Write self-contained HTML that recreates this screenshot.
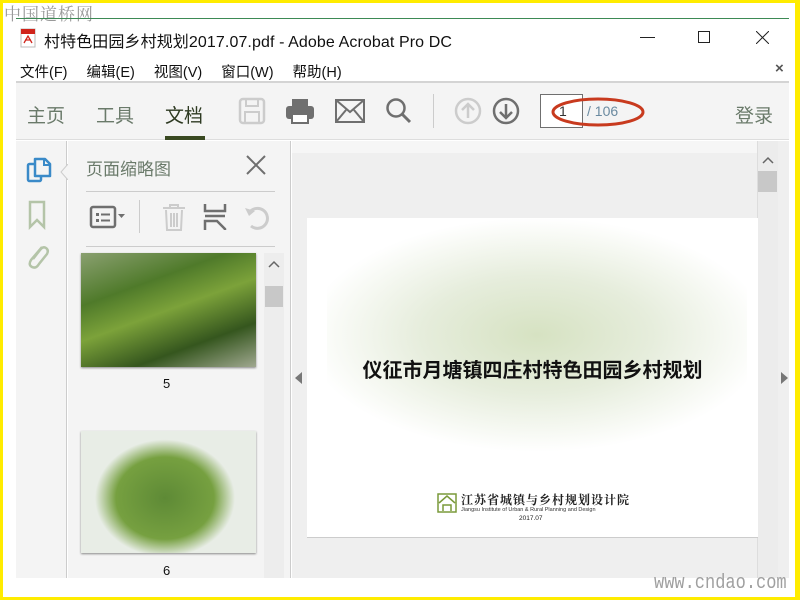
<!DOCTYPE html>
<html><head><meta charset="utf-8"><style>
*{margin:0;padding:0;box-sizing:border-box}
body{width:800px;height:600px;overflow:hidden;background:#ffec00;font-family:"Liberation Sans","Noto Sans CJK SC",sans-serif;position:relative}
.a{position:absolute}
</style></head><body>
<div class="a" style="left:3px;top:3px;width:792px;height:594px;background:#fff"></div>
<div class="a" style="left:4px;top:0px;font-family:'Noto Serif CJK SC',serif;font-size:17px;color:#9a9a9a;letter-spacing:1px">中国道桥网</div>
<div class="a" style="left:16px;top:18px;width:773px;height:1px;background:#3d8a55"></div>
<!-- title -->
<svg class="a" style="left:20px;top:28px" width="16" height="20"><rect x="1" y="1" width="14" height="18" fill="#fff" stroke="#bbb"/><rect x="1" y="1" width="14" height="5" fill="#d0241b"/><path d="M4 15 L8 8 L12 15 M5 12 H11" stroke="#d0241b" fill="none" stroke-width="1.3"/></svg>
<div class="a" style="left:44px;top:28px;font-size:16px;color:#111;letter-spacing:0.1px">村特色田园乡村规划2017.07.pdf - Adobe Acrobat Pro DC</div>
<div class="a" style="left:640px;top:37px;width:15px;height:1px;background:#222"></div>
<div class="a" style="left:698px;top:31px;width:12px;height:12px;border:1px solid #222"></div>
<svg class="a" style="left:756px;top:31px" width="13" height="13"><path d="M0 0L13 13M13 0L0 13" stroke="#222"/></svg>
<!-- menu -->
<div class="a" style="left:20px;top:61px;font-size:14.5px;color:#111">
<span style="margin-right:19px">文件(F)</span><span style="margin-right:19px">编辑(E)</span><span style="margin-right:19px">视图(V)</span><span style="margin-right:19px">窗口(W)</span><span>帮助(H)</span></div>
<div class="a" style="left:775px;top:60px;font-size:15px;color:#555;font-weight:bold">×</div>
<div class="a" style="left:16px;top:81px;width:773px;height:2px;background:#d4d4d4"></div>
<!-- toolbar -->
<div class="a" style="left:16px;top:83px;width:773px;height:57px;background:#f4f4f4;border-bottom:1px solid #ddd"></div>
<div class="a" style="left:27px;top:101px;font-size:19px;color:#6a7a6a">主页</div>
<div class="a" style="left:96px;top:101px;font-size:19px;color:#6a7a6a">工具</div>
<div class="a" style="left:165px;top:101px;font-size:19px;color:#2e3a22">文档</div>
<div class="a" style="left:165px;top:136px;width:40px;height:4px;background:#3a4a22"></div>
<svg class="a" style="left:238px;top:97px" width="28" height="28"><rect x="2" y="2" width="24" height="24" rx="3" fill="none" stroke="#ccc" stroke-width="2.5"/><rect x="8" y="2" width="12" height="7" fill="none" stroke="#ccc" stroke-width="2"/><rect x="7" y="15" width="14" height="11" fill="none" stroke="#ccc" stroke-width="2"/></svg>
<svg class="a" style="left:285px;top:97px" width="30" height="28"><rect x="7" y="2" width="16" height="7" fill="#6f6f6f"/><rect x="1" y="9" width="28" height="13" rx="3" fill="#6f6f6f"/><rect x="7" y="17" width="16" height="9" fill="#fff" stroke="#6f6f6f" stroke-width="2"/></svg>
<svg class="a" style="left:335px;top:99px" width="30" height="24"><rect x="1" y="1" width="28" height="22" fill="none" stroke="#6f6f6f" stroke-width="2"/><path d="M1 1L15 13L29 1M1 23L11 11M29 23L19 11" stroke="#6f6f6f" fill="none" stroke-width="2"/></svg>
<svg class="a" style="left:385px;top:97px" width="28" height="28"><circle cx="11" cy="11" r="8.5" fill="none" stroke="#6f6f6f" stroke-width="2.5"/><path d="M17 17L25 25" stroke="#6f6f6f" stroke-width="3"/></svg>
<div class="a" style="left:433px;top:94px;width:1px;height:34px;background:#ccc"></div>
<svg class="a" style="left:454px;top:97px" width="28" height="28"><circle cx="14" cy="14" r="12" fill="none" stroke="#ccc" stroke-width="2.5"/><path d="M14 21V7M8 13L14 7L20 13" stroke="#ccc" fill="none" stroke-width="2.5"/></svg>
<svg class="a" style="left:492px;top:97px" width="28" height="28"><circle cx="14" cy="14" r="12" fill="none" stroke="#6f6f6f" stroke-width="2.5"/><path d="M14 7V21M8 15L14 21L20 15" stroke="#6f6f6f" fill="none" stroke-width="2.5"/></svg>
<div class="a" style="left:540px;top:94px;width:43px;height:34px;border:1px solid #6f6f6f;background:#fff"></div>
<div class="a" style="left:559px;top:103px;font-size:14px;color:#333">1</div>
<div class="a" style="left:587px;top:103px;font-size:14px;color:#6a8aa0">/ 106</div>
<svg class="a" style="left:550px;top:92px" width="96" height="40"><ellipse cx="48" cy="20" rx="45" ry="13" fill="none" stroke="#c83a1e" stroke-width="3"/></svg>
<div class="a" style="left:735px;top:101px;font-size:19px;color:#6a7a6a">登录</div>
<!-- left rail -->
<div class="a" style="left:16px;top:141px;width:51px;height:437px;background:#f4f4f4;border-right:1px solid #ccc"></div>
<svg class="a" style="left:25px;top:155px" width="28" height="30"><rect x="3" y="9" width="13" height="17" rx="1.5" fill="none" stroke="#3a8ac8" stroke-width="2.5"/><path d="M10 21V4H20L25 9V21Z" fill="#f4f4f4" stroke="#3a8ac8" stroke-width="2.5" stroke-linejoin="round"/><path d="M19 4V10H25" fill="none" stroke="#3a8ac8" stroke-width="2"/></svg>
<svg class="a" style="left:28px;top:200px" width="18" height="30"><path d="M2 2H16V27L9 20L2 27Z" fill="none" stroke="#b4c4a8" stroke-width="2.5"/></svg>
<svg class="a" style="left:24px;top:243px" width="28" height="30"><path d="M18 4L7 17Q4 22 8 24Q12 26 15 21L23 11Q25 7 22 5Q19 3 16 7L9 16" fill="none" stroke="#b4c4a8" stroke-width="2.5"/></svg>
<svg class="a" style="left:60px;top:164px" width="9" height="16"><path d="M8 0L1 8L8 16" fill="#f4f4f4" stroke="#ccc"/></svg>
<!-- panel -->
<div class="a" style="left:68px;top:141px;width:223px;height:437px;background:#f4f4f4;border-right:1px solid #ccc"></div>
<div class="a" style="left:86px;top:155px;font-size:17px;color:#6a7a6a">页面缩略图</div>
<svg class="a" style="left:246px;top:155px" width="20" height="20"><path d="M1 1L19 19M19 1L1 19" stroke="#6f6f6f" stroke-width="2"/></svg>
<div class="a" style="left:86px;top:191px;width:189px;height:1px;background:#ccc"></div>
<svg class="a" style="left:89px;top:205px" width="40" height="24"><rect x="2" y="2" width="24" height="20" rx="2" fill="none" stroke="#6f6f6f" stroke-width="2.5"/><rect x="7" y="8" width="3" height="3" fill="#6f6f6f"/><rect x="7" y="14" width="3" height="3" fill="#6f6f6f"/><path d="M12 9.5H21M12 15.5H21" stroke="#6f6f6f" stroke-width="2"/><path d="M29 9H36L32.5 13Z" fill="#6f6f6f"/></svg>
<div class="a" style="left:139px;top:200px;width:1px;height:33px;background:#ccc"></div>
<svg class="a" style="left:161px;top:202px" width="26" height="30"><path d="M2 6H24M9 6V3H17V6M5 8L6 28H20L21 8M10 11V25M13 11V25M16 11V25" fill="none" stroke="#ccc" stroke-width="2"/></svg>
<svg class="a" style="left:202px;top:202px" width="26" height="30"><path d="M3 2V9H23V2M3 14H23M3 28V19H15L23 27V28" fill="none" stroke="#6f6f6f" stroke-width="2.5"/></svg>
<svg class="a" style="left:243px;top:204px" width="28" height="28"><path d="M8 22A10 10 0 1 0 6 9" fill="none" stroke="#ccc" stroke-width="3"/><path d="M2 4L6 12L12 7Z" fill="#ccc"/></svg>
<div class="a" style="left:86px;top:246px;width:189px;height:1px;background:#ccc"></div>
<div class="a" style="left:81px;top:253px;width:175px;height:114px;background:linear-gradient(160deg,#8aa070 0%,#4f7a2a 30%,#7ca23a 50%,#35561e 75%,#a0a890 100%);box-shadow:0 1px 2px #888"></div>
<div class="a" style="left:163px;top:376px;font-size:13px;color:#111">5</div>
<div class="a" style="left:81px;top:431px;width:175px;height:122px;background:radial-gradient(ellipse 40% 48% at 48% 55%,#5e8a36 0%,#76a040 70%,#e8ede6 100%);box-shadow:0 1px 2px #888"></div>
<div class="a" style="left:163px;top:563px;font-size:13px;color:#111">6</div>
<div class="a" style="left:264px;top:253px;width:20px;height:325px;background:#ededed"></div>
<div class="a" style="left:265px;top:286px;width:18px;height:21px;background:#c8c8c8"></div>
<svg class="a" style="left:268px;top:260px" width="12" height="8"><path d="M1 7L6 2L11 7" stroke="#666" fill="none" stroke-width="1.5"/></svg>
<!-- main -->
<div class="a" style="left:292px;top:141px;width:497px;height:437px;background:#efefef"></div>
<div class="a" style="left:292px;top:141px;width:466px;height:12px;background:#f6f6f6"></div>
<div class="a" style="left:757px;top:141px;width:21px;height:437px;background:#ececec;border-left:1px solid #ddd"></div>
<svg class="a" style="left:762px;top:156px" width="12" height="8"><path d="M1 7L6 2L11 7" stroke="#666" fill="none" stroke-width="1.5"/></svg>
<div class="a" style="left:758px;top:171px;width:19px;height:21px;background:#c8c8c8"></div>
<svg class="a" style="left:295px;top:372px" width="7" height="12"><path d="M7 0L0 6L7 12Z" fill="#777"/></svg>
<svg class="a" style="left:781px;top:372px" width="7" height="12"><path d="M0 0L7 6L0 12Z" fill="#777"/></svg>
<div class="a" style="left:307px;top:218px;width:451px;height:320px;background:#fff;border-bottom:1px solid #ccc;overflow:hidden">
<div class="a" style="left:20px;top:0px;width:420px;height:260px;background:radial-gradient(ellipse 55% 45% at 50% 45%,#d6e2c2 0%,#e6eddc 50%,#fff 100%)"></div>
</div>
<div class="a" style="left:307px;top:354px;width:451px;text-align:center;font-size:20px;font-weight:bold;color:#111">仪征市月塘镇四庄村特色田园乡村规划</div>
<svg class="a" style="left:437px;top:493px" width="20" height="20"><rect x="1" y="1" width="18" height="18" fill="none" stroke="#7a9a3a" stroke-width="1.5"/><path d="M2 10L10 3L18 10M6 18V12H14V18" fill="none" stroke="#7a9a3a" stroke-width="1.5"/></svg>
<div class="a" style="left:461px;top:491px;font-family:'Noto Serif CJK SC',serif;font-size:12px;color:#222;letter-spacing:1px;font-weight:bold">江苏省城镇与乡村规划设计院</div>
<div class="a" style="left:461px;top:507px;font-size:5.5px;color:#333">Jiangsu Institute of Urban &amp; Rural Planning and Design</div>
<div class="a" style="left:519px;top:515px;font-size:6.5px;color:#222">2017.07</div>
<div class="a" style="left:654px;top:572px;font-family:'Liberation Mono',monospace;font-size:20px;color:#a0a0a0;transform:scaleX(0.85);transform-origin:left">www.cndao.com</div>
</body></html>
